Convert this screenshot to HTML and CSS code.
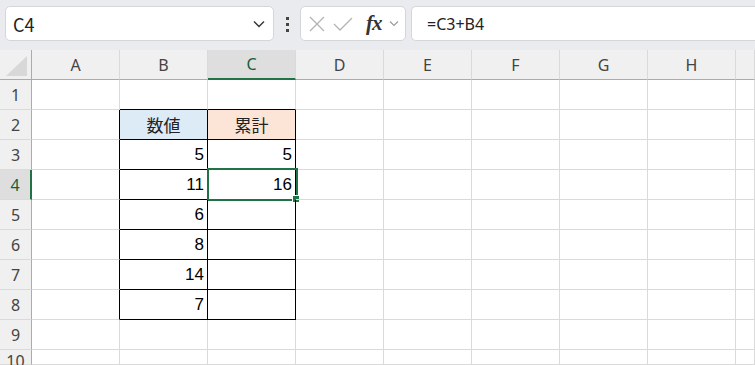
FILE: index.html
```html
<!DOCTYPE html>
<html lang="ja">
<head>
    <meta charset="UTF-8">
    <title>Sheet</title>
    <link rel="stylesheet" href="styles.css">
</head>
<body>
<div class="bar">
    <div class="namebox">
        <span class="name">C4</span>
        <svg class="chev" width="12" height="8" viewBox="0 0 12 8"><path d="M1 1.5 L6 6.5 L11 1.5" fill="none" stroke="#333" stroke-width="1.4"/></svg>
    </div>
    <div class="dots"><i></i><i></i><i></i></div>
    <div class="fxbox">
        <svg width="16" height="16" viewBox="0 0 16 16"><path d="M1 1 L15 15 M15 1 L1 15" stroke="#b4b4b4" stroke-width="1.3" fill="none"/></svg>
        <svg width="20" height="16" viewBox="0 0 20 16"><path d="M1 8 L7 14 L19 2" stroke="#b4b4b4" stroke-width="1.3" fill="none"/></svg>
        <span class="fx">fx</span>
        <svg width="10" height="7" viewBox="0 0 10 7"><path d="M1 1.5 L5 5.5 L9 1.5" fill="none" stroke="#999" stroke-width="1.1"/></svg>
    </div>
    <div class="formula">=C3+B4</div>
</div>

<div class="sheet">
    <div class="corner"><span class="tri"></span></div>
    <div class="colhead">A</div>
    <div class="colhead">B</div>
    <div class="colhead sel">C</div>
    <div class="colhead">D</div>
    <div class="colhead">E</div>
    <div class="colhead">F</div>
    <div class="colhead">G</div>
    <div class="colhead">H</div>
    <div class="colhead"></div>

    <div class="rowhead">1</div>
    <div class="cell"></div><div class="cell tb-top"></div><div class="cell tb-top"></div><div class="cell"></div><div class="cell"></div><div class="cell"></div><div class="cell"></div><div class="cell"></div><div class="cell"></div>

    <div class="rowhead">2</div>
    <div class="cell tb-left"></div><div class="cell tb head-blue">数値</div><div class="cell tb head-orange">累計</div><div class="cell"></div><div class="cell"></div><div class="cell"></div><div class="cell"></div><div class="cell"></div><div class="cell"></div>

    <div class="rowhead">3</div>
    <div class="cell tb-left"></div><div class="cell tb num">5</div><div class="cell tb num">5</div><div class="cell"></div><div class="cell"></div><div class="cell"></div><div class="cell"></div><div class="cell"></div><div class="cell"></div>

    <div class="rowhead sel">4</div>
    <div class="cell tb-left"></div><div class="cell tb num">11</div><div class="cell tb num active">16<span class="selection"><span class="handle"></span></span></div><div class="cell"></div><div class="cell"></div><div class="cell"></div><div class="cell"></div><div class="cell"></div><div class="cell"></div>

    <div class="rowhead">5</div>
    <div class="cell tb-left"></div><div class="cell tb num">6</div><div class="cell tb"></div><div class="cell"></div><div class="cell"></div><div class="cell"></div><div class="cell"></div><div class="cell"></div><div class="cell"></div>

    <div class="rowhead">6</div>
    <div class="cell tb-left"></div><div class="cell tb num">8</div><div class="cell tb"></div><div class="cell"></div><div class="cell"></div><div class="cell"></div><div class="cell"></div><div class="cell"></div><div class="cell"></div>

    <div class="rowhead">7</div>
    <div class="cell tb-left"></div><div class="cell tb num">14</div><div class="cell tb"></div><div class="cell"></div><div class="cell"></div><div class="cell"></div><div class="cell"></div><div class="cell"></div><div class="cell"></div>

    <div class="rowhead">8</div>
    <div class="cell tb-left"></div><div class="cell tb num">7</div><div class="cell tb"></div><div class="cell"></div><div class="cell"></div><div class="cell"></div><div class="cell"></div><div class="cell"></div><div class="cell"></div>

    <div class="rowhead">9</div>
    <div class="cell"></div><div class="cell"></div><div class="cell"></div><div class="cell"></div><div class="cell"></div><div class="cell"></div><div class="cell"></div><div class="cell"></div><div class="cell"></div>

    <div class="rowhead last">10</div>
    <div class="cell"></div><div class="cell"></div><div class="cell"></div><div class="cell"></div><div class="cell"></div><div class="cell"></div><div class="cell"></div><div class="cell"></div><div class="cell"></div>
</div>
</body>
</html>
```

FILE: styles.css
```css
/* Reset */
* {
    box-sizing: border-box;
}
html, body {
    margin: 0;
    padding: 0;
}
body {
    width: 755px;
    height: 365px;
    overflow: hidden;
    background: #fff;
    font: 16px "Liberation Sans", "Noto Sans CJK JP", sans-serif;
    color: #000;
}

/* Formula bar */
.bar {
    height: 50px;
    background: #e9ebee;
    display: flex;
    align-items: flex-start;
    padding-top: 6px;
    padding-left: 5px;
}
.namebox, .fxbox, .formula {
    height: 35px;
    background: #fff;
    border: 1px solid #d4d6d9;
    border-radius: 5px;
    display: flex;
    align-items: center;
}
.namebox {
    width: 269px;
    padding: 0 8px 0 7px;
    justify-content: space-between;
}
.name {
    font: 18px "Noto Sans CJK JP", sans-serif;
    color: #222;
}
.dots {
    width: 26px;
    display: flex;
    flex-direction: column;
    align-items: center;
    gap: 3px;
    padding-top: 11px;
}
.dots i {
    width: 3px;
    height: 3px;
    background: #444;
}
.fxbox {
    width: 106px;
    padding: 0 6px 0 8px;
    justify-content: space-between;
}
.fx {
    font: italic bold 21px "Liberation Serif", serif;
    color: #333;
    margin-left: 6px;
    letter-spacing: -1px;
}
.formula {
    flex: 1;
    margin-left: 5px;
    border-right: none;
    border-radius: 5px 0 0 5px;
    padding-left: 15px;
    font: 16px "Noto Sans", sans-serif;
    color: #222;
}

/* Sheet grid */
.sheet {
    display: grid;
    grid-template-columns: 32px repeat(8, 88px) 1fr;
    grid-template-rows: 30px repeat(9, 30px) 15px;
    font-size: 17px;
}
.corner, .colhead, .rowhead {
    background: #f0f0f0;
    color: #444;
    font: 16px "Noto Sans", sans-serif;
    display: flex;
    align-items: center;
    justify-content: center;
}
.corner {
    border-right: 1px solid #ababab;
    border-bottom: 1px solid #ababab;
    align-items: flex-end;
    justify-content: flex-end;
    padding: 0 4px 3px 0;
}
.tri {
    width: 0;
    height: 0;
    border-left: 21px solid transparent;
    border-bottom: 20px solid #d8d8d8;
}
.colhead {
    border-right: 1px solid #dadada;
    border-bottom: 1px solid #ababab;
}
.colhead.sel {
    background: #dedede;
    color: #155e3a;
    border-bottom: 2px solid #217346;
}
.rowhead {
    border-right: 1px solid #ababab;
    border-bottom: 1px solid #dadada;
}
.rowhead.last {
    align-items: flex-start;
    padding-top: 3px;
    line-height: 1;
}
.rowhead.sel {
    background: #dedede;
    color: #155e3a;
    border-right: 2px solid #217346;
}
.cell {
    border-right: 1px solid #dadada;
    border-bottom: 1px solid #dadada;
    display: flex;
    align-items: center;
    position: relative;
}
.cell.tb {
    border-right-color: #000;
    border-bottom-color: #000;
}
.cell.tb-top {
    border-bottom-color: #000;
}
.cell.tb-left {
    border-right-color: #000;
}
.head-blue, .head-orange {
    justify-content: center;
    font: 17px "Noto Sans CJK JP", sans-serif;
    color: #222;
}
.head-blue {
    background: #ddebf7;
}
.head-orange {
    background: #fce4d6;
}
.num {
    justify-content: flex-end;
    padding-right: 3px;
    font: 17px "Liberation Sans", sans-serif;
}

/* Active cell */
.selection {
    position: absolute;
    left: -1px;
    top: -2px;
    width: 91px;
    height: 33px;
    border: 2px solid #217346;
}
.handle {
    position: absolute;
    right: -3px;
    bottom: -3px;
    width: 6px;
    height: 6px;
    background: #217346;
    border: 1px solid #fff;
    box-sizing: content-box;
    margin: -1px;
}
```
